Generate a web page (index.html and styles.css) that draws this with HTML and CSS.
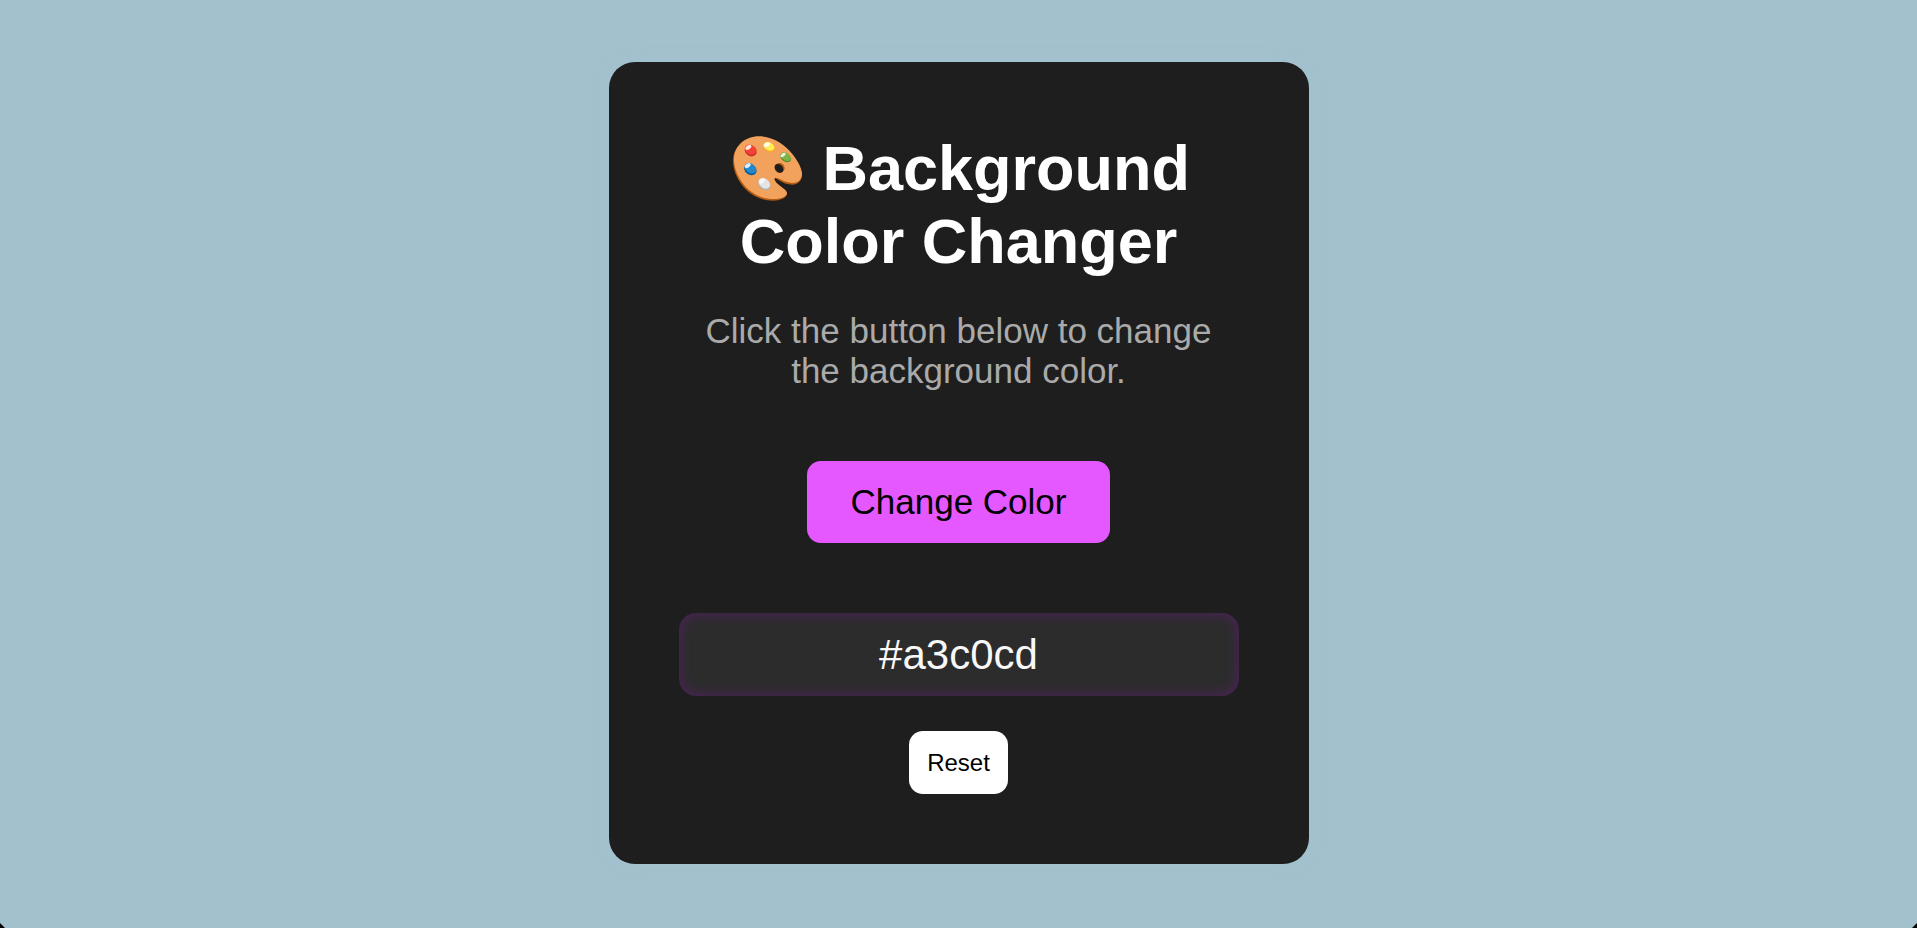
FILE: index.html
```html
<!DOCTYPE html>
<html lang="en">
<head>
<meta charset="utf-8">
<meta name="viewport" content="width=device-width, initial-scale=1">
<title>Background Color Changer</title>
<link rel="stylesheet" href="styles.css">
</head>
<body>
<div class="page">
  <main class="card">
    <h1 class="title">
      <svg class="palette" viewBox="18 33 234 198" aria-hidden="true">
        <path fill="#b35a10" d="M114 36C70 36 36 66 36 108C36 160 84 227 155 227C178 227 198 220 198 205C190 190 162 178 160 160C168 158 184 179 213 179C232 179 243 166 243 150C236 96 174 36 114 36Z"/>
        <path fill="#f2a25c" d="M114 34C72 34 39 63 39 104C39 154 86 222 157 222C184 222 198 214 198 204C198 192 162 178 160 163C160 158 164 157 171 160C184 166 196 173 212 174C231 175 243 163 243 147C243 132 231 105 204 76C180 50 148 34 114 34Z"/>
        <ellipse cx="176" cy="129" rx="15" ry="15" fill="#b35a10" transform="rotate(35 176 129)"/>
        <ellipse cx="174" cy="130" rx="15" ry="11" fill="#1e1e1e" transform="rotate(45 174 130)"/>
        <ellipse cx="89" cy="77" rx="19" ry="16" fill="#c62828" transform="rotate(38 89 77)"/>
        <ellipse cx="88" cy="74" rx="18" ry="14" fill="#f44336" transform="rotate(38 88 74)"/>
        <ellipse cx="82" cy="67" rx="10" ry="6" fill="#fff" fill-opacity=".85" transform="rotate(-35 82 67)"/>
        <ellipse cx="145" cy="67" rx="18" ry="14" fill="#f9a825" transform="rotate(25 145 67)"/>
        <ellipse cx="144" cy="64" rx="17" ry="12" fill="#ffee58" transform="rotate(25 144 64)"/>
        <ellipse cx="137" cy="59" rx="10" ry="6" fill="#fff" fill-opacity=".85" transform="rotate(-30 137 59)"/>
        <ellipse cx="194" cy="98" rx="18" ry="12" fill="#558b2f" transform="rotate(32 194 98)"/>
        <ellipse cx="194" cy="95" rx="17" ry="11" fill="#7cb342" transform="rotate(32 194 95)"/>
        <ellipse cx="186" cy="90" rx="9" ry="5" fill="#fff" fill-opacity=".85" transform="rotate(-35 186 90)"/>
        <ellipse cx="88" cy="133" rx="20" ry="16" fill="#01579b" transform="rotate(38 88 133)"/>
        <ellipse cx="88" cy="130" rx="19" ry="14" fill="#2387cc" transform="rotate(38 88 130)"/>
        <ellipse cx="80" cy="122" rx="10" ry="6" fill="#fff" fill-opacity=".85" transform="rotate(-35 80 122)"/>
        <ellipse cx="130" cy="178" rx="20" ry="16" fill="#b0b0b0" transform="rotate(38 130 178)"/>
        <ellipse cx="130" cy="175" rx="19" ry="14" fill="#e4e4e4" transform="rotate(38 130 175)"/>
        <ellipse cx="123" cy="168" rx="10" ry="6" fill="#fff" fill-opacity=".7" transform="rotate(-35 123 168)"/>
      </svg>
      Background Color Changer
    </h1>
    <p class="hint">Click the button below to change the background color.</p>
    <button class="change" type="button">Change Color</button>
    <input class="code" type="text" value="#a3c0cd" aria-label="Background color" readonly>
    <button class="reset" type="button">Reset</button>
  </main>
</div>
</body>
</html>
```

FILE: styles.css
```css
* {
  box-sizing: border-box;
}

html {
  background: #000;
}

body {
  margin: 0;
  font-family: Arial, "Liberation Sans", sans-serif;
}

.page {
  display: flex;
  align-items: center;
  justify-content: center;
  min-height: 100vh;
  padding-bottom: 2px;
  background: #a3c0cd;
  clip-path: polygon(0 0, 100% 0, 100% calc(100% - 5px), calc(100% - 5px) 100%, 5px 100%, 0 calc(100% - 5px));
}

.card {
  display: flex;
  flex-direction: column;
  align-items: center;
  width: 100%;
  max-width: 700px;
  padding: 70px;
  border-radius: 26px;
  background: #1e1e1e;
  box-shadow: 0 0 18px rgba(163, 205, 215, 0.3);
  text-align: center;
}

.title {
  margin: 0 0 33px;
  color: #fff;
  font-size: 63px;
  line-height: 73px;
}

.palette {
  width: 78px;
  height: 66px;
  vertical-align: -12px;
}

.hint {
  margin: 0 0 70px;
  color: #aaa;
  font-size: 35px;
  line-height: 40px;
}

.change,
.reset,
.code {
  border: 0;
  font-family: inherit;
}

.change {
  margin-bottom: 70px;
  padding: 21px 44px;
  border-radius: 14px;
  background: #e558ff;
  color: #000;
  font-size: 35px;
  line-height: 40px;
}

.code {
  width: 100%;
  height: 83px;
  margin-bottom: 35px;
  padding: 16px;
  border-radius: 17px;
  background: #2c2c2c;
  box-shadow: inset 0 0 14px rgba(175, 0, 230, 0.3);
  color: #f8f8f8;
  font-size: 42px;
  text-align: center;
}

.reset {
  padding: 17px 18px;
  border-radius: 14px;
  background: #fff;
  color: #000;
  font-size: 24px;
  line-height: 29px;
}
```
